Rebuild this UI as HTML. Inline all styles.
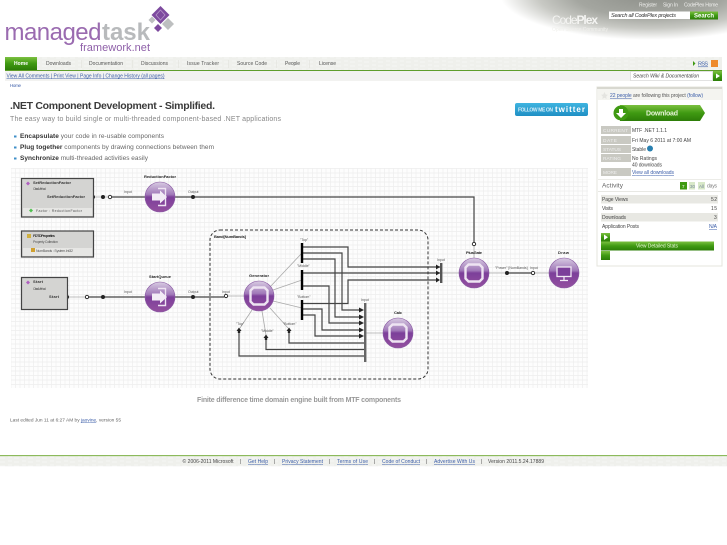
<!DOCTYPE html>
<html><head><meta charset="utf-8"><style>
html,body{margin:0;padding:0;background:#fff;width:727px;height:545px;overflow:hidden}
svg{display:block;font-family:"Liberation Sans",sans-serif}
a,.l{fill:#3b5da8}
</style></head><body>
<svg width="727" height="545" viewBox="0 0 727 545" xmlns="http://www.w3.org/2000/svg">
<defs>
<radialGradient id="hd" gradientUnits="userSpaceOnUse" cx="0" cy="0" r="1" gradientTransform="translate(650 -6) scale(150 46)">
<stop offset="0" stop-color="#8d8f89"/><stop offset=".5" stop-color="#a4a6a0"/><stop offset=".75" stop-color="#c8c9c4"/><stop offset="1" stop-color="#fff"/></radialGradient>
<linearGradient id="gr" x1="0" y1="0" x2="0" y2="1"><stop offset="0" stop-color="#7cc040"/><stop offset=".5" stop-color="#3f9a12"/><stop offset="1" stop-color="#2d7d08"/></linearGradient>
<linearGradient id="tw" x1="0" y1="0" x2="0" y2="1"><stop offset="0" stop-color="#3fb4e0"/><stop offset="1" stop-color="#1f8fc4"/></linearGradient>
<linearGradient id="pu" x1="0" y1="0" x2="0" y2="1"><stop offset="0" stop-color="#d8cbe2"/><stop offset=".42" stop-color="#a078b8"/><stop offset=".5" stop-color="#7c3f9a"/><stop offset="1" stop-color="#94509f"/></linearGradient>
<pattern id="gd" width="9" height="9" patternUnits="userSpaceOnUse"><rect width="9" height="9" fill="#fdfdfd"/><path d="M0 2H9M0 6.500H9M2 0V9M6.500 0V9" stroke="#eeeeee" stroke-width=".7"/></pattern>
<pattern id="nv" width="14" height="4" patternUnits="userSpaceOnUse"><rect width="14" height="4" fill="#eff0ec"/><path d="M0 2H5M8 1H12" stroke="#f8f8f6" stroke-width=".8"/></pattern>
<g id="ci"><circle r="15" fill="url(#pu)" stroke="#8a5aa3" stroke-width=".6"/></g>
<g id="gear"><use href="#ci"/><path d="M-5.500-8.500H5.500L8.500-5.500V5.500L5.500 8.500H-5.500L-8.500 5.500V-5.500Z" fill="none" stroke="#eee4f2" stroke-width="2.400"/></g>
<g id="arr"><use href="#ci"/><path d="M-2-8.500H5.500V8.500H-2" fill="none" stroke="#eee4f2" stroke-width="1.400"/><path d="M-8-3.500H0V-6.500L7 0L0 6.500V3.500H-8Z" fill="#f2ecf5"/></g>
</defs>

<!-- header top right -->
<rect x="490" y="0" width="237" height="42" fill="url(#hd)"/>
<g font-size="5" fill="#f0f0ee"><text x="639" y="6.500" textLength="18">Register</text><text x="663" y="6.500" textLength="15">Sign In</text><text x="684" y="6.500" textLength="34">CodePlex Home</text></g>
<text x="552" y="24" font-size="12" fill="#f4f4f2" textLength="46">Code<tspan font-weight="bold">Plex</tspan></text>
<text x="552" y="31" font-size="5" fill="#f0f0ec" textLength="56">Open Source Community</text>
<rect x="609" y="11.500" width="81" height="7.500" fill="#fff"/>
<text x="611" y="17" font-size="5.500" font-style="italic" fill="#333" textLength="65">Search all CodePlex projects</text>
<rect x="690" y="11.500" width="28" height="8" fill="url(#gr)"/>
<text x="694" y="17.500" font-size="6" font-weight="bold" fill="#fff" textLength="20">Search</text>

<!-- logo -->
<text x="4.500" y="40" font-size="24" fill="#9a6bb0" textLength="97">managed</text>
<text x="102" y="40" font-size="24" font-weight="bold" fill="#b8babc" textLength="48">task</text>
<text x="80" y="51" font-size="11" fill="#8e5fa8" textLength="70">framework.net</text>
<path d="M160.500 6L169.500 15L160.500 24L151.500 15Z" fill="#7d4a9e"/>
<path d="M160.500 10L165 15L160.500 20L156 15Z" fill="none" stroke="#b695c8" stroke-width=".8"/>
<path d="M152 16.500L155.500 20L152 23.500L148.500 20Z" fill="#bdbfc0"/>
<path d="M168 18L174 24L168 30L162 24Z" fill="#bdbfc0"/>
<path d="M158 24L162 28L158 32L154 28Z" fill="#7d4a9e"/>

<!-- nav -->
<rect x="5" y="57" width="717" height="13" fill="url(#nv)"/>
<rect x="5" y="57" width="32" height="13" fill="url(#gr)"/>
<rect x="5" y="70" width="717" height="1.200" fill="#5f9e2c"/>
<rect x="5" y="71" width="717" height="10" fill="#f2f2f0"/>
<text x="14" y="65" font-size="5" font-weight="bold" fill="#fff" textLength="14">Home</text>
<g font-size="5" fill="#555"><text x="46" y="65" textLength="25">Downloads</text><text x="89" y="65" textLength="34">Documentation</text><text x="141" y="65" textLength="27">Discussions</text><text x="187" y="65" textLength="32">Issue Tracker</text><text x="237" y="65" textLength="30">Source Code</text><text x="285" y="65" textLength="15">People</text><text x="319" y="65" textLength="17">License</text></g>
<g fill="#e2e2dc"><rect x="81" y="60" width=".6" height="8"/><rect x="132" y="60" width=".6" height="8"/><rect x="178" y="60" width=".6" height="8"/><rect x="228" y="60" width=".6" height="8"/><rect x="276" y="60" width=".6" height="8"/><rect x="309" y="60" width=".6" height="8"/></g>
<path d="M693 61L695.500 63.500L693 66Z" fill="#3f9a12"/>
<text x="698" y="65.500" font-size="5.500" class="l" textLength="10" text-decoration="underline">RSS</text>
<rect x="711" y="60" width="7" height="7" fill="#ee8a2c"/>
<text x="6.500" y="77.500" font-size="5" class="l" textLength="158" text-decoration="underline">View All Comments | Print View | Page Info | Change History (all pages)</text>
<rect x="630.500" y="71.500" width="82" height="9" fill="#fff" stroke="#cccccc" stroke-width=".5"/>
<text x="633" y="77.500" font-size="5" font-style="italic" fill="#444" textLength="66">Search Wiki &amp; Documentation</text>
<rect x="713" y="71" width="9" height="10" fill="url(#gr)"/><path d="M716 73.500L720 76L716 78.500Z" fill="#fff"/>
<text x="10" y="87" font-size="4.500" class="l" textLength="11">Home</text>

<!-- main text -->
<text x="10" y="109" font-size="10.500" font-weight="bold" fill="#3a3a3a" textLength="205">.NET Component Development - Simplified.</text>
<text x="10" y="121" font-size="7" fill="#888" textLength="271">The easy way to build single or multi-threaded component-based .NET applications</text>
<g font-size="6.500" fill="#666"><text x="20" y="138" textLength="144"><tspan font-weight="bold" fill="#333">Encapsulate</tspan> your code in re-usable components</text>
<text x="20" y="149" textLength="194"><tspan font-weight="bold" fill="#333">Plug together</tspan> components by drawing connections between them</text>
<text x="20" y="160" textLength="128"><tspan font-weight="bold" fill="#333">Synchronize</tspan> multi-threaded activities easily</text></g>
<g fill="#3f8fc8"><rect x="14" y="135.500" width="2.500" height="2"/><rect x="14" y="146.500" width="2.500" height="2"/><rect x="14" y="157.500" width="2.500" height="2"/></g>
<rect x="515" y="103" width="73" height="13" rx="2" fill="url(#tw)"/>
<text x="518" y="111.500" font-size="5" font-weight="bold" fill="#d4edf8" textLength="35">FOLLOW ME ON</text>
<text x="555" y="112" font-size="8" font-weight="bold" fill="#fff" textLength="30">twitter</text>

<!-- diagram -->
<rect x="11" y="168" width="577" height="220" fill="url(#gd)"/>
<g stroke="#aaa" stroke-width=".8" fill="none"><path d="M93 197H110M67 297H87M228 296H245M270 287L302 253M273 290L302 280M273 301L302 308M252 310L240 328M262 311L266 335M270 308L288 328M366 333H384M442 273H460M489 273H549M474 242V258"/></g>
<g fill="none" stroke="#444" stroke-width="1.200">
<path d="M110 197H145M175 197H474V242"/>
<path d="M87 297H145M175 297H224"/>
<path d="M302 247H348V267H440"/>
<path d="M302 253H342V310H360"/>
<path d="M302 259H335V317H360"/>
<path d="M302 273H440"/>
<path d="M302 286H329V323H360"/>
<path d="M302 303.500H348V280H437"/>
<path d="M302 309H322V330H360"/>
<path d="M302 315H315V336H360"/>
<path d="M289 331V343H365M266 339V349.500H365M239 331V356H365"/>
<path d="M507 273H532"/>
</g>
<g fill="#000"><rect x="300.800" y="243" width="2.400" height="20"/><rect x="300.800" y="270" width="2.400" height="20"/><rect x="300.800" y="300" width="2.400" height="20"/></g>
<rect x="364" y="303" width="2.400" height="59" fill="#666"/>
<rect x="440" y="263" width="2.400" height="20" fill="#555"/>
<g fill="#222"><path d="M359 307.500L364 310L359 312.500Z"/><path d="M359 314.500L364 317L359 319.500Z"/><path d="M359 320.500L364 323L359 325.500Z"/><path d="M359 327.500L364 330L359 332.500Z"/><path d="M359 333.500L364 336L359 338.500Z"/><path d="M436 264.500L440 267L436 269.500Z"/><path d="M436 270.500L440 273L436 275.500Z"/><path d="M436 277.500L440 280L436 282.500Z"/>
<path d="M239 327.500L241.500 331H240.200V333H237.800V331H236.500Z"/><path d="M266 334.500L268.500 338H267.200V340H264.800V338H263.500Z"/><path d="M289 327.500L291.500 331H290.200V333H287.800V331H286.500Z"/>
<circle cx="103" cy="197" r="2"/><circle cx="103" cy="297" r="2"/><circle cx="193" cy="197" r="2"/><circle cx="193" cy="297" r="2"/><circle cx="507" cy="273" r="2"/><circle cx="93" cy="197" r="2"/><circle cx="67" cy="297" r="2"/></g>
<g fill="#fff" stroke="#222" stroke-width=".9"><circle cx="110" cy="197" r="1.700"/><circle cx="87" cy="297" r="1.700"/><circle cx="226" cy="296" r="1.700"/><circle cx="474" cy="244" r="1.700"/><circle cx="533" cy="273" r="1.700"/></g>
<rect x="210" y="230" width="218" height="149" rx="10" fill="none" stroke="#333" stroke-width="1" stroke-dasharray="3 2"/>
<use href="#arr" x="160" y="197"/><use href="#arr" x="160" y="297"/>
<use href="#gear" x="259" y="296"/><use href="#gear" x="398" y="333"/><use href="#gear" x="474" y="273"/>
<use href="#ci" x="564" y="273"/>
<rect x="557" y="267" width="14" height="9.500" fill="#7c3f9a" stroke="#f0e8f4" stroke-width="1.300"/><path d="M564 277V280M560 280.500H568" stroke="#f0e8f4" stroke-width="1.300"/>
<g font-size="4" font-weight="bold" fill="#222"><text x="144" y="178" textLength="32">ReductionFactor</text><text x="149" y="278" textLength="22">StartQueue</text><text x="249" y="277" textLength="20">Generator</text><text x="394" y="314" textLength="8">Calc</text><text x="466" y="254" textLength="16">PlusGate</text><text x="558" y="254" textLength="11">Draw</text><text x="214" y="238" textLength="32">Band[NumBands]</text></g>
<g font-size="3.500" fill="#555"><text x="124" y="193">Input</text><text x="188" y="193">Output</text><text x="124" y="293">Input</text><text x="188" y="293">Output</text><text x="222" y="293">Input</text><text x="300" y="241">"Top"</text><text x="297" y="267">"Middle"</text><text x="297" y="298">"Bottom"</text><text x="361" y="301">Input</text><text x="437" y="261">Input</text><text x="495" y="269">"Power" [NumBands]</text><text x="530" y="269">Input</text><text x="236" y="325">"Top"</text><text x="261" y="332">"Middle"</text><text x="283" y="325">"Bottom"</text></g>
<!-- boxes -->
<g fill="#d4d4d2" stroke="#444" stroke-width="1.200"><rect x="21.500" y="178.500" width="72" height="38.500"/><rect x="21.500" y="231" width="72" height="26"/><rect x="21.500" y="277.500" width="46" height="32"/></g>
<rect x="23" y="208" width="69" height="8" fill="#e6e6e4"/><rect x="23" y="248" width="69" height="8" fill="#e6e6e4"/>
<path d="M28 181.500L30 183.500L28 185.500L26 183.500Z" fill="#b060c0"/><path d="M31 208.500L33 210.500L31 212.500L29 210.500Z" fill="#50c050"/><path d="M27 234H31V238H27Z" fill="#d0b040"/><path d="M31 248H35V252H31Z" fill="#d0a030"/><path d="M28 280.500L30 282.500L28 284.500L26 282.500Z" fill="#b060c0"/>
<g font-size="4" font-weight="bold" fill="#333"><text x="33" y="184" textLength="38">SetReductionFactor</text><text x="47" y="198" textLength="38">SetReductionFactor</text><text x="33" y="237" textLength="22">FDTDProperties</text><text x="33" y="283" textLength="10">Start</text><text x="49" y="298" textLength="10">Start</text></g>
<g font-size="3.500" fill="#555"><text x="33" y="190" textLength="13">Class Method</text><text x="36" y="212" textLength="46">Factor : ReductionFactor</text><text x="33" y="243" textLength="25">Property Collection</text><text x="36" y="252" textLength="37">NumBands : System.Int32</text><text x="33" y="290" textLength="13">Class Method</text></g>
<text x="197" y="402" font-size="7" font-weight="bold" fill="#999" textLength="204">Finite difference time domain engine built from MTF components</text>
<text x="10" y="421.500" font-size="4.800" fill="#666" textLength="111">Last edited Jun 11 at 6:27 AM by <tspan class="l" text-decoration="underline">jaovine</tspan>, version 55</text>

<!-- right panel -->
<rect x="597" y="87" width="125" height="179" fill="#fff" stroke="#e4e4de" stroke-width="1"/>
<rect x="597" y="87" width="125" height="2" fill="#d8d8d0"/>
<rect x="598" y="89" width="123" height="11" fill="#f4f4f0"/>
<path d="M604.500 92L605.700 94.500L608 94.800L606.200 96.500L606.700 99L604.500 97.800L602.300 99L602.800 96.500L601 94.800L603.300 94.500Z" fill="#e4e4e0"/>
<text x="610" y="97" font-size="5" fill="#555" textLength="93"><tspan class="l" text-decoration="underline">22 people</tspan> are following this project <tspan class="l">(follow)</tspan></text>
<path d="M620 105H700L705 113L700 121H620Z" fill="url(#gr)"/><circle cx="621" cy="113" r="7.500" fill="#3f9a12"/>
<path d="M619 109H623V113H626L621 118L616 113H619Z" fill="#fff"/>
<text x="646" y="115.500" font-size="7" font-weight="bold" fill="#e8f4d8" textLength="32">Download</text>
<g fill="#c9c9c2"><rect x="601" y="126" width="30" height="8"/><rect x="601" y="136" width="30" height="8"/><rect x="601" y="145" width="30" height="8"/><rect x="601" y="154" width="30" height="8"/><rect x="601" y="168" width="30" height="8"/></g>
<g font-size="4.800" fill="#eee"><text x="603" y="132" textLength="25">CURRENT</text><text x="603" y="142" textLength="14">DATE</text><text x="603" y="151" textLength="18">STATUS</text><text x="603" y="160" textLength="18">RATING</text><text x="603" y="174" textLength="14">MORE</text></g>
<g font-size="5" fill="#444"><text x="632" y="132" textLength="35">MTF .NET 1.1.1</text><text x="632" y="142" textLength="59">Fri May 6 2011 at 7:00 AM</text><text x="632" y="151" textLength="14">Stable</text><text x="632" y="160" textLength="25">No Ratings</text><text x="632" y="166.500" textLength="30">40 downloads</text><text x="632" y="174" class="l" textLength="42" text-decoration="underline">View all downloads</text></g>
<circle cx="650" cy="148.500" r="3" fill="#2a80b0"/>
<rect x="598" y="179" width="123" height="1" fill="#ecece8"/>
<text x="602" y="187.500" font-size="6.500" fill="#666" textLength="21">Activity</text>
<rect x="680" y="182" width="7" height="7.500" fill="#3f9a12"/><rect x="689" y="182" width="6" height="7.500" fill="#d8e8c8"/><rect x="698" y="182" width="7" height="7.500" fill="#d8e8c8"/>
<g font-size="4.500" fill="#fff"><text x="682" y="188">7</text></g><g font-size="4.500" fill="#789"><text x="690" y="188">30</text><text x="699" y="188">All</text></g>
<text x="707" y="187.500" font-size="5" fill="#777" textLength="10">days</text>
<rect x="598" y="191" width="123" height="1" fill="#e8e8e4"/>
<rect x="601" y="195" width="117" height="8.500" fill="#e8e8e3"/><rect x="601" y="213" width="117" height="8.500" fill="#e8e8e3"/>
<g font-size="5" fill="#444"><text x="602" y="201" textLength="26">Page Views</text><text x="602" y="210" textLength="11">Visits</text><text x="602" y="219" textLength="24">Downloads</text><text x="602" y="228" textLength="37">Application Posts</text><text x="711" y="201" textLength="6">52</text><text x="711" y="210" textLength="6">15</text><text x="714" y="219" textLength="3">3</text><text x="709" y="228" class="l" textLength="8" text-decoration="underline">N/A</text></g>
<rect x="601" y="233" width="9" height="8.500" fill="url(#gr)"/><path d="M604 234.500L608 237.200L604 240Z" fill="#fff"/>
<rect x="601" y="241.500" width="113" height="9" fill="url(#gr)"/>
<rect x="601" y="251" width="9" height="9" fill="url(#gr)"/>
<text x="636" y="247.500" font-size="5" fill="#e8f4d8" textLength="42">View Detailed Stats</text>

<!-- footer -->
<rect x="0" y="455" width="727" height="1.300" fill="#8cba5c"/>
<rect x="0" y="456.300" width="727" height="10" fill="url(#nv)"/>
<g font-size="5" fill="#444"><text x="182.500" y="463" textLength="51">© 2006-2011 Microsoft</text><text x="488" y="463" textLength="56">Version 2011.5.24.17889</text><text x="240" y="463">|</text><text x="274" y="463">|</text><text x="329" y="463">|</text><text x="374" y="463">|</text><text x="426" y="463">|</text><text x="481" y="463">|</text></g>
<g font-size="5" class="l" text-decoration="underline"><text x="248" y="463" textLength="20">Get Help</text><text x="282" y="463" textLength="41">Privacy Statement</text><text x="337" y="463" textLength="31">Terms of Use</text><text x="382" y="463" textLength="38">Code of Conduct</text><text x="434" y="463" textLength="41">Advertise With Us</text></g>
</svg>
</body></html>
